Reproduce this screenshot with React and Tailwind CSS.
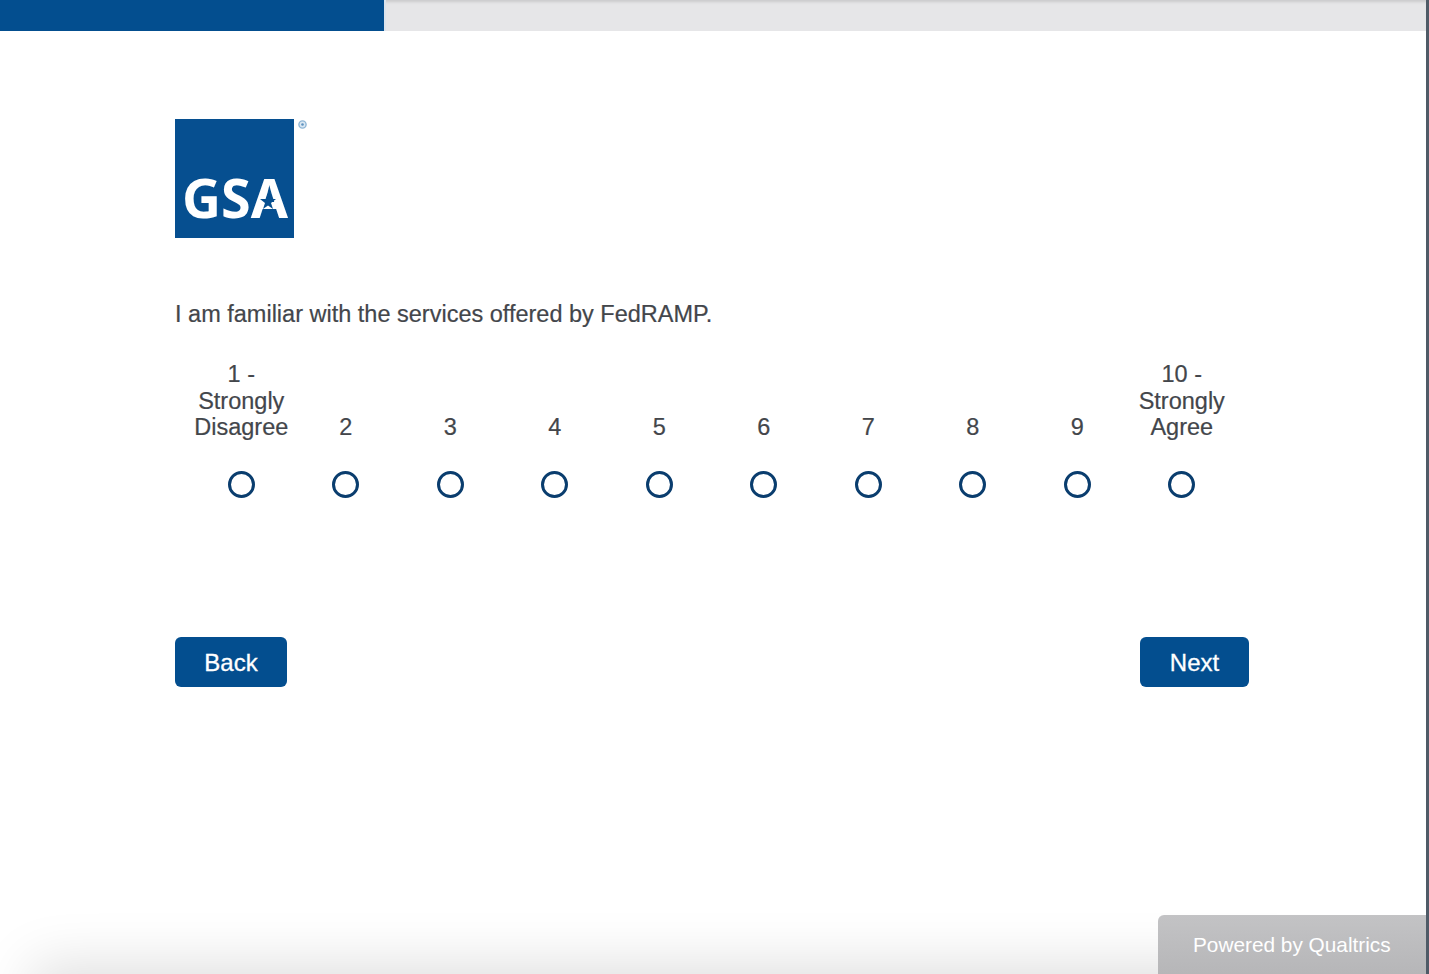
const font = { fontFamily: '"Liberation Sans", Arial, sans-serif' };
const scale = ["1 - Strongly Disagree", "2", "3", "4", "5", "6", "7", "8", "9", "10 - Strongly Agree"];

function Logo() {
  return (
    <div className="relative w-[119px] h-[119px] bg-[#064f90] overflow-visible">
      <svg width="119" height="119" viewBox="0 0 119 119" className="block">
        <text x="7" y="99" fill="#fff" fontSize="53" fontWeight="700" fontFamily='"Noto Sans", "Open Sans", sans-serif' textLength="106" lengthAdjust="spacingAndGlyphs">GSA</text>
        <polygon points="93,74 95,80 101,80 96,84 98,90 93,86.5 88,90 90,84 85,80 91,80" fill="#064f90" />
      </svg>
      <svg width="9" height="9" viewBox="0 0 9 9" className="absolute left-[123px] top-[1px]">
        <circle cx="4.5" cy="4.5" r="3.6" fill="#dbe8f3" stroke="#8fb6d6" strokeWidth="1.4" />
        <circle cx="4.5" cy="4.5" r="1.3" fill="#5d92bf" />
      </svg>
    </div>
  );
}

export default function App() {
  return (
    <div style={font} className="relative h-[974px] overflow-hidden bg-white border-r-[3px] border-[#4f5b67] text-[#43464b]">
      <div className="flex h-[31px] bg-[#e6e6e8] shadow-[inset_0_4px_3px_-2px_rgba(0,0,0,0.12)]">
        <div className="w-[386px] bg-[#034e8f] border-r-2 border-[#dbe3ec]" />
      </div>

      <main className="pl-[175px] pr-[177px]">
        <div className="mt-[88px]"><Logo /></div>

        <p className="mt-[62px] text-[23.5px] leading-[28px] [-webkit-text-stroke:0.2px_#43464b]">I am familiar with the services offered by FedRAMP.</p>

        <div className="mt-[32.5px] ml-[14px] w-[1045px] grid grid-cols-10">
          {scale.map((label) => (
            <div key={label} className="flex flex-col items-center">
              <div className="h-[80px] flex items-end justify-center text-center text-[23.5px] leading-[26.5px] w-[100px] [-webkit-text-stroke:0.2px_#43464b]">
                <span>{label}</span>
              </div>
              <div className="mt-[30px] w-[27px] h-[27px] rounded-full border-[3px] border-[#0a3d6e] bg-white" />
            </div>
          ))}
        </div>

        <div className="mt-[139.5px] flex justify-between">
          <button style={font} className="w-[112px] h-[50px] pt-[1px] rounded-md bg-[#034e8f] text-white text-[24px] [-webkit-text-stroke:0.3px_white]">Back</button>
          <button style={font} className="w-[109px] h-[50px] pt-[1px] rounded-md bg-[#034e8f] text-white text-[24px] [-webkit-text-stroke:0.3px_white]">Next</button>
        </div>
      </main>

      <div className="absolute left-[50px] right-[100px] top-[982px] h-[40px] shadow-[0_0_55px_18px_rgba(0,0,0,0.13)]" />

      <div className="absolute right-0 bottom-0 w-[268px] h-[59px] rounded-tl-md bg-gradient-to-b from-[#c3c3c5] to-[#b6b6b8] flex items-center pl-[35px] text-white text-[20.8px]">
        Powered by Qualtrics
      </div>
    </div>
  );
}
